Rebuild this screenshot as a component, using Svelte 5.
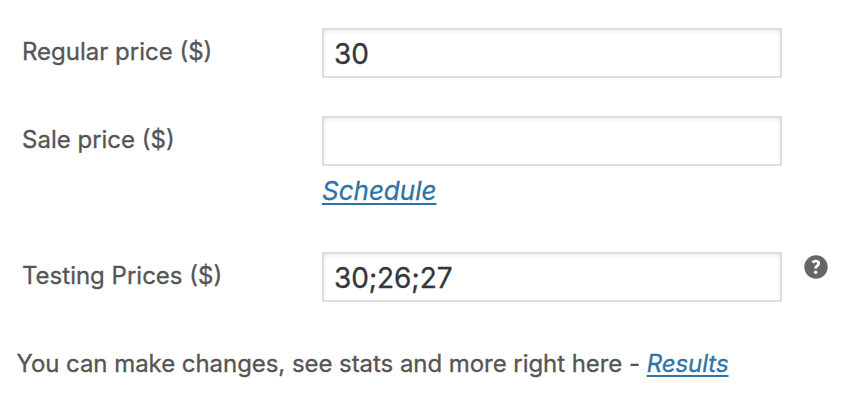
<script>
  let regular = $state('30');
  let sale = $state('');
  let testing = $state('30;26;27');
</script>

<main class="panel">
  <div class="row regular">
    <label for="regular">Regular price ($)</label>
    <input id="regular" type="text" bind:value={regular} />
  </div>
  <div class="row sale">
    <label for="sale">Sale price ($)</label>
    <div class="control">
      <input id="sale" type="text" bind:value={sale} />
      <a class="schedule" href="#schedule">Schedule</a>
    </div>
  </div>
  <div class="row testing">
    <label for="testing">Testing Prices ($)</label>
    <input id="testing" type="text" bind:value={testing} />
    <svg class="help" viewBox="0 0 24 24" role="img" aria-label="Help">
      <circle cx="12" cy="12" r="11.7" fill="#666" />
      <path d="M8.4 7.4C9.3 6.6 10.5 6.2 11.7 6.2c1.9 0 3 .9 3 2.4 0 2.3-3.1 2.4-3.1 4.9" fill="none" stroke="#fff" stroke-width="2.8" />
      <circle cx="11.6" cy="17.2" r="1.7" fill="#fff" />
    </svg>
  </div>
  <p class="note"><span>You can make changes, see stats and more right here -&nbsp;</span><a href="#results">Results</a></p>
</main>

<style>
  :global(body) { margin: 0; background: #fff; }
  .panel {
    box-sizing: border-box;
    width: 866px;
    height: 408px;
    padding-top: 28px;
    overflow: hidden;
    font-family: Inter, "Open Sans", sans-serif;
    color: #555;
    font-size: 24px;
    -webkit-text-stroke: 0.3px currentColor;
  }
  .row { display: flex; align-items: flex-start; padding-left: 22px; }
  .regular { height: 88px; }
  .sale { height: 136px; }
  .testing { height: 88px; }
  label { width: 300px; flex: none; line-height: 48px; white-space: nowrap; }
  input {
    box-sizing: border-box;
    display: block;
    width: 460px;
    height: 50px;
    margin: 0;
    padding: 2px 10px 0;
    border: 2px solid #ddd;
    border-radius: 0;
    outline: none;
    background: #fff;
    box-shadow: inset 0 2px 4px rgba(0, 0, 0, 0.07);
    color: #32373c;
    font: 28px Inter, "Open Sans", sans-serif;
    letter-spacing: -0.1px;
    -webkit-text-stroke: 0.3px currentColor;
  }
  a { color: #2e74a5; font-style: italic; text-decoration: underline; text-decoration-thickness: 2px; text-underline-offset: 3px; text-decoration-skip-ink: none; }
  .schedule { display: inline-block; font-size: 26px; line-height: 50px; }
  .help { width: 24px; height: 24px; margin: 3px 0 0 22px; }
  .note { margin: 0; padding-left: 16.5px; line-height: 48px; white-space: nowrap; letter-spacing: -0.055px; }
</style>
